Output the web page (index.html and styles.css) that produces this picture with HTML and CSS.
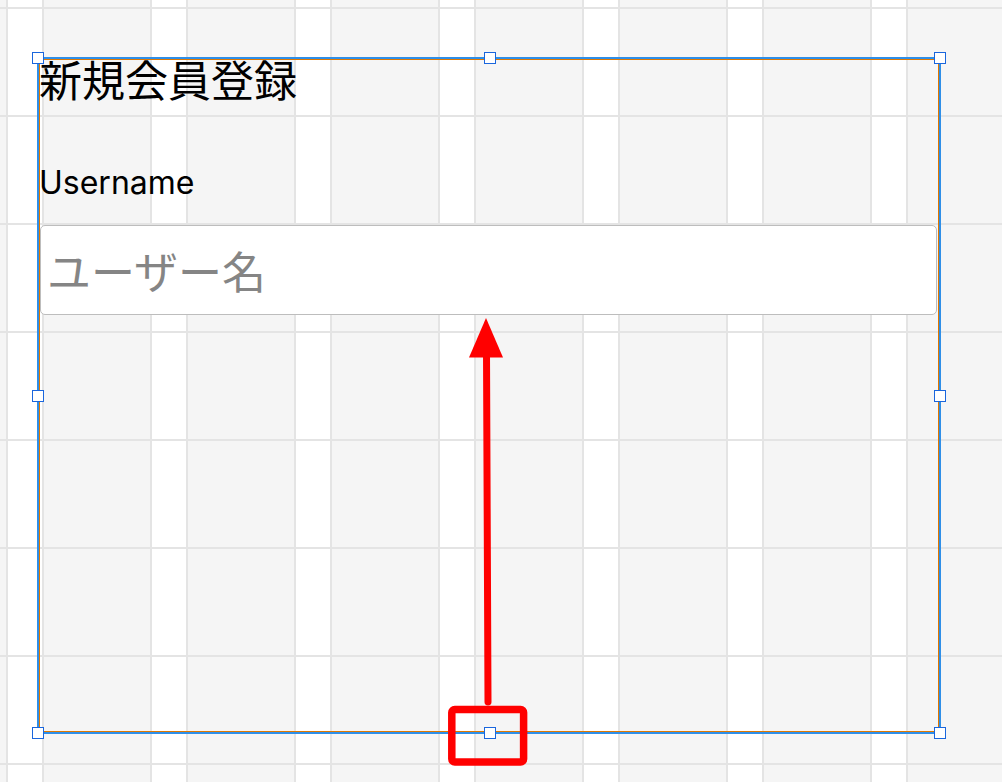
FILE: index.html
```html
<!DOCTYPE html>
<html lang="ja">
<head>
    <meta charset="UTF-8">
    <meta name="viewport" content="width=device-width, initial-scale=1.0">
    <title>新規会員登録</title>
    <link rel="stylesheet" href="styles.css">
</head>
<body>
    <div class="canvas">
        <form class="registro">
            <h1>新規会員登録</h1>
            <label for="username">Username</label>
            <input type="text" id="username" name="username" placeholder="ユーザー名">
        </form>

        <!-- seleccion del elemento -->
        <div class="seleccion">
            <span class="handle h-tl"></span>
            <span class="handle h-tc"></span>
            <span class="handle h-tr"></span>
            <span class="handle h-ml"></span>
            <span class="handle h-mr"></span>
            <span class="handle h-bl"></span>
            <span class="handle h-bc"></span>
            <span class="handle h-br"></span>
        </div>

        <!-- anotacion roja -->
        <svg class="anotacion" width="1002" height="782" viewBox="0 0 1002 782">
            <line x1="488" y1="702" x2="486.5" y2="352" stroke="#ff0000" stroke-width="7" stroke-linecap="round"/>
            <polygon points="486,318 469,357.5 503,357.5" fill="#ff0000"/>
            <rect x="451.8" y="709.5" width="71.8" height="52.5" rx="3" fill="none" stroke="#ff0000" stroke-width="7.5"/>
        </svg>
    </div>
</body>
</html>
```

FILE: styles.css
```css
body {
    margin: 0;
    overflow: hidden;
}

.canvas {
    position: relative;
    width: 1002px;
    height: 782px;
    overflow: hidden;
    box-sizing: border-box;
    padding: 59px 0 0 39px;
    background-color: #f5f5f5;
    background-image:
        repeating-linear-gradient(to bottom, transparent 0 7px, #e4e4e4 7px 9px, transparent 9px 108px),
        repeating-linear-gradient(to right, transparent 0 6px, #e4e4e4 6px 8px, #fff 8px 42px, #e4e4e4 42px 44px, transparent 44px 144px);
}

.registro {
    width: 898px;
    height: 673px;
    display: flex;
    flex-direction: column;
}

h1 {
    margin: 0;
    font-family: "Noto Sans CJK JP", sans-serif;
    font-weight: 400;
    font-size: 43px;
    line-height: 0.9;
    color: #000;
}

label {
    margin-top: 66px;
    font-family: Inter, "Noto Sans", sans-serif;
    font-size: 32px;
    line-height: 1.2;
    color: #000;
}

input {
    margin: 23px 0 0 1px;
    width: 897px;
    height: 90px;
    box-sizing: border-box;
    padding: 0 6px;
    border: 1px solid #bdbdbd;
    border-radius: 5px;
    background: #fff;
    font-family: "Noto Sans CJK JP", sans-serif;
    font-size: 44px;
    color: #000;
    outline: none;
}

input::placeholder {
    color: #858585;
}

.seleccion {
    position: absolute;
    left: 37px;
    top: 57px;
    width: 904px;
    height: 677px;
    box-sizing: border-box;
    border: 2px solid #2f8fe8;
    box-shadow: inset 0 0 0 1px #e07800;
    pointer-events: none;
}

.handle {
    position: absolute;
    width: 12px;
    height: 12px;
    box-sizing: border-box;
    border: 1.5px solid #1a66dd;
    background: #fff;
}

.h-tl { left: -7px; top: -7px; }
.h-tc { left: 444.5px; top: -7px; }
.h-tr { left: 894.5px; top: -7px; }
.h-ml { left: -7px; top: 331px; }
.h-mr { left: 894.5px; top: 331px; }
.h-bl { left: -7px; top: 668px; }
.h-bc { left: 444.5px; top: 668px; }
.h-br { left: 894.5px; top: 668px; }

.anotacion {
    position: absolute;
    left: 0;
    top: 0;
    pointer-events: none;
}
```
